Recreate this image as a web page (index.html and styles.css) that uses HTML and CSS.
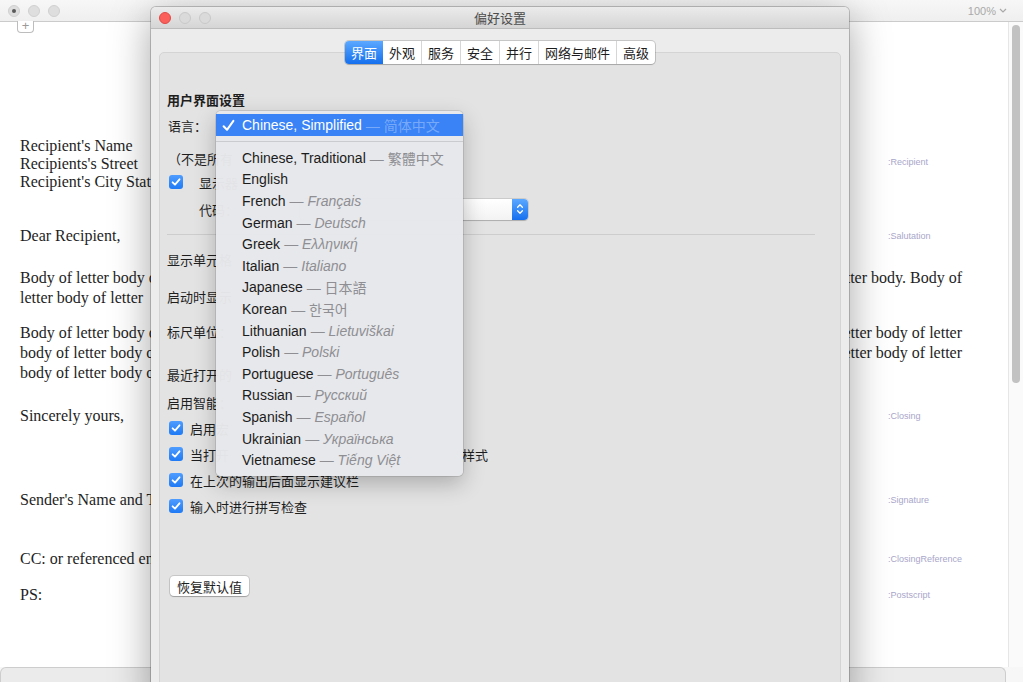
FILE: index.html
```html
<!DOCTYPE html>
<html lang="zh-CN">
<head>
    <meta charset="UTF-8">
    <title>偏好设置</title>
    <link rel="stylesheet" href="styles.css">
</head>
<body>
    <!-- Letter editor window in the back -->
    <div class="app">
        <div class="app-toolbar">
            <div class="lights">
                <span class="light dirty"></span>
                <span class="light"></span>
                <span class="light"></span>
            </div>
            <div class="zoom-level">100%
                <svg width="8" height="5" viewBox="0 0 8 5"><path d="M1 1 L4 4 L7 1" fill="none" stroke="#a9a9a9" stroke-width="1.2"/></svg>
            </div>
        </div>

        <div class="app-main">
            <div class="doc">
                <div class="add-tab">+</div>

                <!-- the middle of each line sits behind the preferences window -->
                <div class="block recipient">
                    <div class="text">
                        <div class="line">Recipient's Name</div>
                        <div class="line">Recipients's Street</div>
                        <div class="line">Recipient's City State</div>
                    </div>
                    <div class="tag">:Recipient</div>
                </div>

                <div class="block salutation">
                    <div class="text">
                        <div class="line">Dear Recipient,</div>
                    </div>
                    <div class="tag">:Salutation</div>
                </div>

                <div class="block body-one">
                    <div class="text">
                        <div class="line"><span>Body of letter body of</span><span>letter body. Body of</span></div>
                        <div class="line">letter body of letter</div>
                    </div>
                </div>

                <div class="block body-two">
                    <div class="text">
                        <div class="line"><span>Body of letter body of</span><span>letter body of letter</span></div>
                        <div class="line"><span>body of letter body of</span><span>letter body of letter</span></div>
                        <div class="line">body of letter body of</div>
                    </div>
                </div>

                <div class="block closing">
                    <div class="text">
                        <div class="line">Sincerely yours,</div>
                    </div>
                    <div class="tag">:Closing</div>
                </div>

                <div class="block signature">
                    <div class="text">
                        <div class="line">Sender's Name and Title</div>
                    </div>
                    <div class="tag">:Signature</div>
                </div>

                <div class="block cc">
                    <div class="text">
                        <div class="line">CC: or referenced enclosures</div>
                    </div>
                    <div class="tag">:ClosingReference</div>
                </div>

                <div class="block ps">
                    <div class="text">
                        <div class="line">PS:</div>
                    </div>
                    <div class="tag">:Postscript</div>
                </div>
            </div>
            <div class="vscroll"><div class="vthumb"></div></div>
        </div>

        <div class="hscroll"><div class="hthumb"></div></div>
    </div>

    <!-- Preferences window -->
    <div class="prefs">
        <div class="prefs-title">
            <div class="lights">
                <span class="light close"></span>
                <span class="light off"></span>
                <span class="light off"></span>
            </div>
            <div class="prefs-name">偏好设置</div>
            <div></div>
        </div>

        <div class="prefs-body">
            <div class="tabs">
                <div class="tab-group">
                    <span class="tab active">界面</span>
                    <span class="tab">外观</span>
                    <span class="tab">服务</span>
                    <span class="tab">安全</span>
                    <span class="tab">并行</span>
                    <span class="tab">网络与邮件</span>
                    <span class="tab">高级</span>
                </div>
            </div>

            <div class="panel">
                <div class="row heading">用户界面设置</div>
                <div class="row lang-row">语言：</div>
                <div class="row note-row">（不是所有</div>
                <div class="row tight-row">
                    <span class="check wide"><svg viewBox="0 0 14 14" width="14" height="14"><path d="M3.6 7.3 L6 9.7 L10.5 4.3" fill="none" stroke="#fff" stroke-width="1.8" stroke-linecap="round" stroke-linejoin="round"/></svg></span>
                    显示器
                </div>
                <div class="row code-row">
                    代码：
                    <div class="popup">
                        <span class="stepper"><svg width="8" height="14" viewBox="0 0 8 14"><path d="M1.6 5.2 L4 2.8 L6.4 5.2 M1.6 8.8 L4 11.2 L6.4 8.8" fill="none" stroke="#fff" stroke-width="1.3" stroke-linecap="round" stroke-linejoin="round"/></svg></span>
                    </div>
                </div>

                <div class="divider"></div>

                <div class="row">显示单元格</div>
                <div class="row startup-row">启动时显示</div>
                <div class="row ruler-row">标尺单位：</div>
                <div class="row recent-row">最近打开的</div>
                <div class="row smart-row">启用智能：</div>
                <div class="row check-row">
                    <span class="check"><svg viewBox="0 0 14 14" width="14" height="14"><path d="M3.6 7.3 L6 9.7 L10.5 4.3" fill="none" stroke="#fff" stroke-width="1.8" stroke-linecap="round" stroke-linejoin="round"/></svg></span>
                    启用宏
                </div>
                <div class="row check-row">
                    <span class="check"><svg viewBox="0 0 14 14" width="14" height="14"><path d="M3.6 7.3 L6 9.7 L10.5 4.3" fill="none" stroke="#fff" stroke-width="1.8" stroke-linecap="round" stroke-linejoin="round"/></svg></span>
                    当打开<span class="tail">样式</span>
                </div>
                <div class="row check-row">
                    <span class="check"><svg viewBox="0 0 14 14" width="14" height="14"><path d="M3.6 7.3 L6 9.7 L10.5 4.3" fill="none" stroke="#fff" stroke-width="1.8" stroke-linecap="round" stroke-linejoin="round"/></svg></span>
                    在上次的输出后面显示建议栏
                </div>
                <div class="row check-row">
                    <span class="check"><svg viewBox="0 0 14 14" width="14" height="14"><path d="M3.6 7.3 L6 9.7 L10.5 4.3" fill="none" stroke="#fff" stroke-width="1.8" stroke-linecap="round" stroke-linejoin="round"/></svg></span>
                    输入时进行拼写检查
                </div>

                <button class="reset">恢复默认值</button>
            </div>
        </div>

        <!-- open language menu -->
        <div class="menu">
            <div class="menu-item selected">
                <svg class="tick" width="13" height="13" viewBox="0 0 13 13"><path d="M1.6 7.2 L5 10.8 L11.4 1.8" fill="none" stroke="#fff" stroke-width="2" stroke-linecap="round" stroke-linejoin="round"/></svg>
                Chinese, Simplified <span class="native">— 简体中文</span>
            </div>
            <div class="menu-sep"></div>
            <div class="menu-item">Chinese, Traditional <span class="native">— 繁體中文</span></div>
            <div class="menu-item">English</div>
            <div class="menu-item">French <span class="native latin">— Français</span></div>
            <div class="menu-item">German <span class="native latin">— Deutsch</span></div>
            <div class="menu-item">Greek <span class="native latin">— Ελληνική</span></div>
            <div class="menu-item">Italian <span class="native latin">— Italiano</span></div>
            <div class="menu-item">Japanese <span class="native">— 日本語</span></div>
            <div class="menu-item">Korean <span class="native">— 한국어</span></div>
            <div class="menu-item">Lithuanian <span class="native latin">— Lietuviškai</span></div>
            <div class="menu-item">Polish <span class="native latin">— Polski</span></div>
            <div class="menu-item">Portuguese <span class="native latin">— Português</span></div>
            <div class="menu-item">Russian <span class="native latin">— Русский</span></div>
            <div class="menu-item">Spanish <span class="native latin">— Español</span></div>
            <div class="menu-item">Ukrainian <span class="native latin">— Українська</span></div>
            <div class="menu-item">Vietnamese <span class="native latin">— Tiếng Việt</span></div>
        </div>
    </div>
</body>
</html>
```

FILE: styles.css
```css
* {
    box-sizing: border-box;
}

body {
    margin: 0;
    width: 1023px;
    height: 682px;
    overflow: hidden;
    position: relative;
    background: #fff;
    font-family: "Liberation Sans", "Noto Sans CJK SC", sans-serif;
    color: #1d1d1d;
}

/* ---------- back window ---------- */
.app {
    display: flex;
    flex-direction: column;
    height: 682px;
}

.app-toolbar {
    flex: none;
    height: 22px;
    display: flex;
    align-items: center;
    justify-content: space-between;
    padding: 0 16px 0 8px;
    background: linear-gradient(#f7f7f7, #efefef);
    border-bottom: 1px solid #cbcbcb;
}

.lights {
    display: flex;
    gap: 8px;
}

.light {
    width: 12px;
    height: 12px;
    border-radius: 50%;
    background: #dedede;
    border: 1px solid #d0d0d0;
    display: flex;
    align-items: center;
    justify-content: center;
}

.light.dirty::after {
    content: '';
    width: 4px;
    height: 4px;
    border-radius: 50%;
    background: #5a5a5a;
}

.zoom-level {
    display: flex;
    align-items: center;
    gap: 3px;
    font-size: 11px;
    color: #a9a9a9;
}

.app-main {
    flex: 1;
    display: flex;
    min-height: 0;
}

.doc {
    flex: 1;
    padding-left: 20px;
    font-family: "Liberation Serif", serif;
    font-size: 16px;
    color: #1e1e1e;
}

.add-tab {
    width: 17px;
    height: 12px;
    margin: -1px 0 0 -3px;
    border: 1px solid #bdbdbd;
    border-top: none;
    border-radius: 0 0 4px 4px;
    font-family: "Liberation Sans", sans-serif;
    font-size: 13px;
    line-height: 9px;
    color: #9a9a9a;
    text-align: center;
    background: #fff;
}

.block {
    display: grid;
    grid-template-columns: 868px 74px;
    align-items: center;
}

.block .text {
    grid-column: 1 / 3;
    grid-row: 1;
    line-height: 20px;
}

.line {
    display: flex;
    justify-content: space-between;
    white-space: nowrap;
}

.block .tag {
    grid-column: 2;
    grid-row: 1;
    font-family: "Liberation Sans", sans-serif;
    font-size: 9px;
    color: #a9a6c9;
    white-space: nowrap;
}

.recipient { margin-top: 104px; }
.recipient .text { line-height: 18px; }
.recipient .tag { margin-top: -4px; }
.salutation { margin-top: 35px; }
.body-one { margin-top: 22px; }
.body-two { margin-top: 15px; }
.closing { margin-top: 23px; }
.signature { margin-top: 64px; }
.cc { margin-top: 39px; }
.ps { margin-top: 16px; }

.vscroll {
    flex: none;
    width: 15px;
    padding: 3px 0 0 3px;
    background: #fafafa;
    border-left: 1px solid #e6e6e6;
}

.vthumb {
    width: 8px;
    height: 358px;
    border-radius: 4px;
    background: #c2c2c2;
}

.hscroll {
    flex: none;
    height: 15px;
    background: #f7f7f7;
}

.hthumb {
    width: 1006px;
    height: 15px;
    border: 1px solid #cdcdcd;
    border-bottom: none;
    border-radius: 6px 6px 0 0;
    background: #ebebeb;
}

/* ---------- preferences window ---------- */
.prefs {
    position: absolute;
    left: 151px;
    top: 7px;
    width: 698px;
    height: 700px;
    background: #ececec;
    border-radius: 5px 5px 0 0;
    box-shadow: 0 0 0 1px rgba(0, 0, 0, 0.2), 0 10px 40px rgba(0, 0, 0, 0.36);
}

.prefs-title {
    height: 22px;
    display: grid;
    grid-template-columns: 1fr auto 1fr;
    align-items: center;
    padding: 0 8px;
    background: linear-gradient(#ebebeb, #d5d5d5);
    border-bottom: 1px solid #bcbcbc;
    border-radius: 5px 5px 0 0;
}

.light.close {
    background: #fc605b;
    border-color: #df4a45;
}

.light.off {
    background: #dadada;
    border-color: #c9c9c9;
}

.prefs-name {
    font-family: "Noto Sans CJK SC", sans-serif;
    font-size: 13px;
    color: #4c4c4c;
}

.prefs-body {
    padding: 12px 8px 0;
}

.tabs {
    position: relative;
    z-index: 1;
    display: flex;
    justify-content: center;
    margin-bottom: -12px;
}

.tab-group {
    display: flex;
    background: #fff;
    border-radius: 4px;
    overflow: hidden;
    box-shadow: 0 0 0 1px rgba(0, 0, 0, 0.16), 0 1px 1px rgba(0, 0, 0, 0.12);
}

.tab {
    height: 23px;
    padding: 0 6px;
    line-height: 23px;
    font-family: "Noto Sans CJK SC", sans-serif;
    font-size: 13px;
    color: #1d1d1d;
    border-left: 1px solid #d6d6d6;
}

.tab.active {
    border-left: none;
    color: #fff;
    background: linear-gradient(#5ba8ff, #1570ee);
}

.tab.active + .tab {
    border-left: none;
}

.panel {
    height: 640px;
    display: flex;
    flex-direction: column;
    align-items: flex-start;
    padding: 36px 7px 0;
    background: #e3e3e3;
    border: 1px solid #d4d4d4;
    border-radius: 5px;
}

.row {
    height: 20px;
    display: flex;
    align-items: center;
    font-family: "Noto Sans CJK SC", sans-serif;
    font-size: 13px;
    color: #1e1e1e;
    white-space: nowrap;
}

.heading { font-weight: bold; }
.lang-row { margin-top: 6px; padding-left: 1px; }
.note-row { margin-top: 13px; padding-left: 1px; }
.tight-row { margin-top: 4px; }
.code-row { margin-top: 6px; height: 22px; padding-left: 32px; }
.startup-row { margin-top: 17px; }
.ruler-row { margin-top: 15px; }
.recent-row { margin-top: 23px; }
.smart-row { margin-top: 8px; }
.check-row { margin-top: 6px; }

.tail {
    margin-left: 233px;
}

.check {
    width: 14px;
    height: 14px;
    margin: 0 7px 0 2px;
    border-radius: 3px;
    background: linear-gradient(#4e9cff, #1f7af5);
    display: flex;
}

.check.wide {
    margin-right: 16px;
}

.popup {
    width: 228px;
    height: 21px;
    margin-left: 62px;
    display: flex;
    justify-content: flex-end;
    background: linear-gradient(#ffffff, #f3f3f3);
    border-radius: 4px;
    box-shadow: 0 0 0 1px rgba(0, 0, 0, 0.1), 0 1px 1px rgba(0, 0, 0, 0.15);
}

.stepper {
    width: 16px;
    display: flex;
    align-items: center;
    justify-content: center;
    background: linear-gradient(#5ba8ff, #1570ee);
    border-radius: 0 4px 4px 0;
}

.divider {
    width: 648px;
    height: 1px;
    margin: 14px 0;
    background: #cdcdcd;
}

.reset {
    height: 20px;
    margin: 60px 0 0 3px;
    padding: 0 7px;
    border: none;
    border-radius: 4px;
    background: #fff;
    box-shadow: 0 0 0 1px rgba(0, 0, 0, 0.12), 0 1px 1px rgba(0, 0, 0, 0.2);
    font-family: "Noto Sans CJK SC", sans-serif;
    font-size: 13px;
    color: #1e1e1e;
}

/* language menu */
.menu {
    position: absolute;
    left: 65px;
    top: 104px;
    width: 247px;
    padding: 3px 0 5px;
    background: rgba(231, 232, 235, 0.98);
    border-radius: 5px;
    box-shadow: 0 0 0 1px rgba(0, 0, 0, 0.1), 0 8px 22px rgba(0, 0, 0, 0.24);
    font-family: "Liberation Sans", "Noto Sans CJK SC", sans-serif;
    font-size: 14px;
}

.menu-item {
    height: 21.6px;
    display: flex;
    align-items: center;
    padding-left: 26px;
    color: #1c1c1c;
    white-space: nowrap;
}

.menu-item.selected {
    height: 22px;
    padding-left: 6px;
    background: #3a83f6;
    color: #fff;
}

.tick {
    margin-right: 7px;
}

.native {
    margin-left: 4px;
    color: #8e8e93;
}

.native.latin {
    font-style: italic;
}

.selected .native {
    color: rgba(255, 255, 255, 0.32);
}

.menu-sep {
    height: 11px;
    display: flex;
    align-items: center;
}

.menu-sep::after {
    content: '';
    flex: 1;
    height: 1px;
    background: #cacbcf;
}
```
